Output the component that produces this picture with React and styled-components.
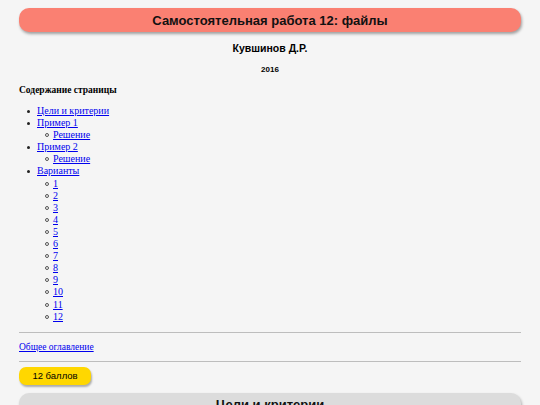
import React from "react";
import styled, { createGlobalStyle } from "styled-components";

const GlobalStyle = createGlobalStyle`
  html, body {
    margin: 0;
    padding: 0;
    background: #f5f5f5;
  }
  body {
    font-family: "Liberation Serif", serif;
    font-size: 10px;
    color: #000;
  }
`;

const Page = styled.div`
  padding: 8px 19px 0 19px;
`;

const TitleBar = styled.h1`
  margin: 0;
  height: 24px;
  display: flex;
  align-items: center;
  justify-content: center;
  background: #fa8072;
  border-radius: 10px;
  box-shadow: 1px 2px 3px rgba(0, 0, 0, 0.35);
  font-family: "Liberation Sans", Arial, sans-serif;
  font-size: 13px;
  font-weight: bold;
  color: #111;
`;

const Author = styled.div`
  margin-top: 9px;
  text-align: center;
  font-family: "Liberation Sans", Arial, sans-serif;
  font-size: 10.5px;
  font-weight: bold;
  line-height: 14px;
`;

const Year = styled.div`
  margin-top: 10px;
  text-align: center;
  font-family: "Liberation Sans", Arial, sans-serif;
  font-size: 8px;
  font-weight: bold;
  line-height: 10px;
`;

const TocTitle = styled.div`
  margin-top: 9px;
  font-weight: bold;
  font-size: 9.5px;
  line-height: 12px;
`;

const List = styled.ul`
  margin: ${(p) => (p.$nested ? "0" : "9px 0 0 0")};
  padding-left: ${(p) => (p.$nested ? "16px" : "18px")};
  list-style: none;
  line-height: 12.1px;
  font-size: 10px;
`;

const Item = styled.li`
  position: relative;

  &::before {
    content: "";
    position: absolute;
    box-sizing: border-box;
    left: ${(p) => (p.$circle ? "-8px" : "-10px")};
    top: ${(p) => (p.$circle ? "4px" : "4.5px")};
    width: ${(p) => (p.$circle ? "4px" : "3px")};
    height: ${(p) => (p.$circle ? "4px" : "3px")};
    border-radius: 50%;
    background: ${(p) => (p.$circle ? "transparent" : "#222")};
    border: ${(p) => (p.$circle ? "1px solid #555" : "none")};
  }
`;

const Link = styled.a`
  color: #0000ee;
  text-decoration: underline;
`;

const Rule = styled.hr`
  margin: ${(p) => p.$m || "0"};
  border: none;
  border-top: 1px solid #bdbdbd;
`;

const FooterLink = styled.div`
  margin: 8px 0 8px;
  font-size: 9.5px;
  line-height: 12px;
`;

const Badge = styled.div`
  margin-top: 5px;
  width: 72px;
  height: 18px;
  display: flex;
  align-items: center;
  justify-content: center;
  background: #ffd700;
  border-radius: 7px;
  box-shadow: 1px 2px 2px rgba(0, 0, 0, 0.3);
  font-family: "Liberation Sans", Arial, sans-serif;
  font-size: 9.5px;
`;

const SectionBar = styled.h2`
  margin: 8px 0 0 0;
  height: 24px;
  display: flex;
  align-items: center;
  justify-content: center;
  background: #dcdcdc;
  border-radius: 10px;
  box-shadow: 1px 2px 3px rgba(0, 0, 0, 0.3);
  font-family: "Liberation Sans", Arial, sans-serif;
  font-size: 13px;
  font-weight: bold;
  color: #111;
`;

const variants = Array.from({ length: 12 }, (_, i) => String(i + 1));

export default function App() {
  return (
    <Page>
      <GlobalStyle />
      <TitleBar>Самостоятельная работа 12: файлы</TitleBar>
      <Author>Кувшинов Д.Р.</Author>
      <Year>2016</Year>
      <TocTitle>Содержание страницы</TocTitle>
      <List>
        <Item><Link href="#goals">Цели и критерии</Link></Item>
        <Item>
          <Link href="#ex1">Пример 1</Link>
          <List $nested>
            <Item $circle><Link href="#sol1">Решение</Link></Item>
          </List>
        </Item>
        <Item>
          <Link href="#ex2">Пример 2</Link>
          <List $nested>
            <Item $circle><Link href="#sol2">Решение</Link></Item>
          </List>
        </Item>
        <Item>
          <Link href="#variants">Варианты</Link>
          <List $nested>
            {variants.map((v) => (
              <Item $circle key={v}><Link href={"#v" + v}>{v}</Link></Item>
            ))}
          </List>
        </Item>
      </List>
      <Rule $m="9px 0 0 0" />
      <FooterLink><Link href="#index">Общее оглавление</Link></FooterLink>
      <Rule />
      <Badge>12 баллов</Badge>
      <SectionBar>Цели и критерии</SectionBar>
    </Page>
  );
}
